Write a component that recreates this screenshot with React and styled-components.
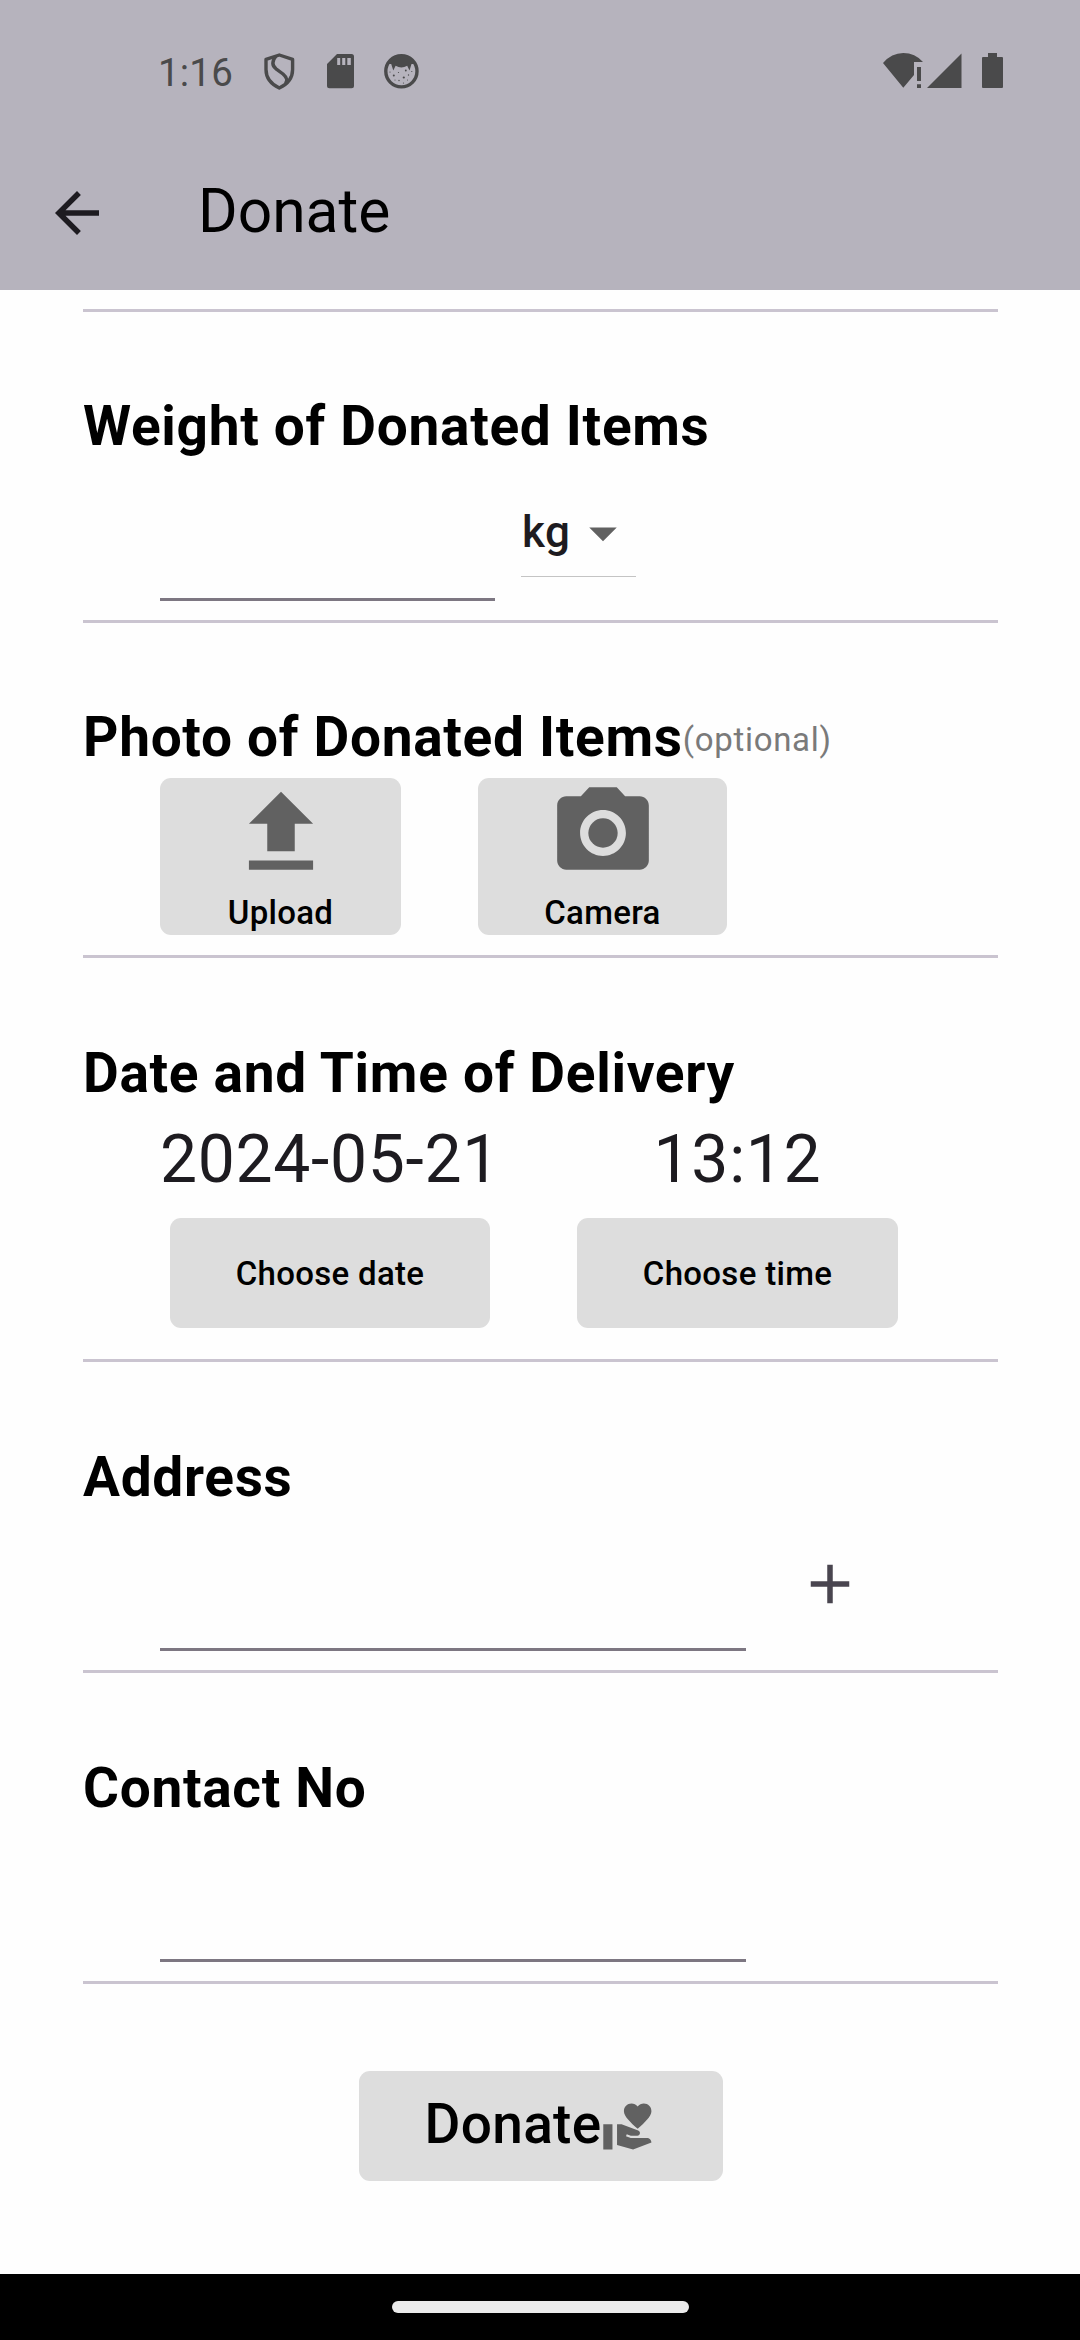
import React from 'react';
import styled, { createGlobalStyle } from 'styled-components';
import { MdArrowBack, MdFileUpload, MdPhotoCamera, MdArrowDropDown, MdAdd, MdVolunteerActivism } from 'react-icons/md';

const GlobalStyle = createGlobalStyle`
  * { box-sizing: border-box; }
  body { margin: 0; background: #fefefe; font-family: Roboto, "Liberation Sans", sans-serif; }
  svg { display: block; flex: none; }
`;

const Screen = styled.div`
  width: 1080px;
  height: 2340px;
  display: flex;
  flex-direction: column;
  background: #fefefe;
  overflow: hidden;
`;

const Header = styled.header`
  height: 290px;
  flex: none;
  background: #b6b3bd;
`;

const StatusBar = styled.div`
  height: 136px;
  display: flex;
  align-items: flex-start;
  padding: 50px 77px 0 158px;
  color: #4a4a4b;
`;

const Clock = styled.span`
  width: 105px;
  font-size: 38.5px;
  line-height: 45px;
  letter-spacing: 0.2px;
`;

const StatusIcons = styled.div`
  display: flex;
  gap: ${(p) => p.$gap}px;
  margin-left: ${(p) => (p.$end ? 'auto' : '0')};
`;

const AppBar = styled.div`
  height: 154px;
  display: flex;
  align-items: center;
  padding: 0 44px;
  color: #1d1b20;
`;

const Title = styled.h1`
  margin: 0 0 4px 88px;
  color: #000;
  font-size: 60.5px;
  font-weight: 400;
  line-height: 71px;
  letter-spacing: 0;
`;

const Form = styled.main`
  flex: 1;
  display: flex;
  flex-direction: column;
  padding: 19px 82px 0 83px;
`;

const Divider = styled.hr`
  width: 100%;
  height: 3px;
  flex: none;
  margin: 0;
  border: 0;
  background: #cac4d0;
`;

const Section = styled.section`
  height: ${(p) => p.$height}px;
  flex: none;
  padding-top: ${(p) => p.$top || 82}px;
`;

const HeadingRow = styled.div`
  display: flex;
  align-items: center;
  height: 64px;
`;

const Heading = styled.h2`
  margin: 0;
  color: #000;
  font-size: 55px;
  font-weight: 700;
  line-height: 64px;
  letter-spacing: 0.6875px;
  white-space: nowrap;
`;

const Optional = styled.span`
  margin-top: 4px;
  color: #7a7a7a;
  font-size: 33px;
  line-height: 39px;
  letter-spacing: 0.6875px;
`;

const Row = styled.div`
  display: flex;
  align-items: flex-start;
  padding-left: 77px;
  padding-top: ${(p) => p.$top || 0}px;
`;

const Field = styled.input`
  width: ${(p) => p.$width}px;
  height: ${(p) => p.$height || 142}px;
  padding: 0;
  border: 0;
  border-bottom: 3px solid #7d7782;
  border-radius: 0;
  background: transparent;
  font: 400 44px Roboto, sans-serif;
  outline: none;
`;

const UnitSelect = styled.div`
  width: 115px;
  height: 77px;
  display: flex;
  margin: 42px 0 0 26px;
  justify-content: space-between;
  border-bottom: 1px solid #c4c4c4;
  color: #616161;
`;

const Unit = styled.span`
  padding: 6px 0 0 1px;
  margin-right: -4px;
  color: #1d1b20;
  font-size: 44px;
  font-weight: 500;
  line-height: 52px;
  letter-spacing: 0.4px;
`;

const Button = styled.button`
  width: ${(p) => p.$width}px;
  height: ${(p) => p.$height || 110}px;
  display: flex;
  flex-direction: ${(p) => (p.$stacked ? 'column' : 'row')};
  align-items: center;
  justify-content: ${(p) => (p.$stacked ? 'flex-start' : 'center')};
  gap: ${(p) => (p.$stacked ? 5 : 0)}px;
  margin: 0;
  margin-left: ${(p) => p.$left || 0}px;
  padding: 0;
  border: 0;
  border-radius: 11px;
  background: #dddddd;
  color: #616161;
  font-family: inherit;
`;

const Label = styled.span`
  margin-bottom: ${(p) => (p.$large ? 4 : 0)}px;
  color: #000;
  font-size: ${(p) => (p.$large ? 55 : 33)}px;
  font-weight: 500;
  line-height: ${(p) => (p.$large ? 64 : 39)}px;
  letter-spacing: 0.3px;
  white-space: nowrap;
`;

const Picker = styled.div`
  display: flex;
  flex-direction: column;
  width: ${(p) => p.$width}px;
  margin-left: ${(p) => p.$left || 0}px;
  align-items: ${(p) => (p.$center ? 'center' : 'flex-start')};
  gap: 20px;
`;

const Value = styled.span`
  color: #1d1b20;
  font-size: 66px;
  line-height: 77px;
  letter-spacing: 0.6875px;
  white-space: nowrap;
`;

const AddButton = styled.button`
  margin: 42px 0 0 51px;
  padding: 0;
  border: 0;
  background: transparent;
  color: #49454f;
`;

const Submit = styled.div`
  display: flex;
  justify-content: center;
  padding-top: 87px;
`;

const NavBar = styled.footer`
  height: 66px;
  flex: none;
  display: flex;
  justify-content: center;
  padding-top: 27px;
  background: #000;
`;

const NavHandle = styled.div`
  width: 297px;
  height: 12px;
  border-radius: 6px;
  background: #ebebeb;
`;

const ShieldIcon = () => (
  <svg width="35" height="40" viewBox="0 0 35 40" fill="none" stroke="#4a4a4b" strokeWidth="3.4" strokeLinejoin="round">
    <path d="M16.300 5 29.600 9.400V19.500C29.600 27.500 24.500 34.200 16.300 38C8.200 34.200 3 27.500 3 19.500V9.400Z" />
    <path d="M13 6C9 11 9 15.500 13 18.800L20 24C24 27.500 24.800 30 22.500 33.500" />
  </svg>
);

const SdIcon = () => (
  <svg width="27" height="40" viewBox="0 0 27 40" fill="#4a4a4b">
    <path
      fillRule="evenodd"
      d="M10 4H24.500Q27 4 27 6.500V35.800Q27 38.300 24.500 38.300H2.500Q0 38.300 0 35.800V14ZM10.200 8V15H13.200V8ZM15.200 8V15H18.300V8ZM20.300 8V15H23.800V8Z"
    />
  </svg>
);

const FaceIcon = () => (
  <svg width="36" height="40" viewBox="0 0 36 40">
    <circle cx="18.400" cy="21.300" r="15.600" fill="none" stroke="#4a4a4b" strokeWidth="3.400" />
    <path
      d="M5 14C8 8 12 5 18.400 5S29 8 32 14L28.500 14 26.500 20.500 24.200 15.800Q18.400 19 12.600 15.800L10.300 20.500 8.200 14Z"
      fill="#4a4a4b"
    />
    <g fill="#4a4a4b">
      <circle cx="22.800" cy="20.500" r="0.900" />
      <circle cx="10.800" cy="25.500" r="1" />
      <circle cx="20.800" cy="27.500" r="1.100" />
      <circle cx="15.500" cy="22.500" r="0.600" />
      <circle cx="25.500" cy="25" r="0.700" />
      <circle cx="16" cy="30.500" r="0.700" />
      <circle cx="7" cy="22" r="0.600" />
      <circle cx="28.800" cy="21.500" r="0.600" />
      <circle cx="12" cy="30" r="0.500" />
      <circle cx="24.500" cy="30" r="0.500" />
      <circle cx="20.500" cy="33" r="0.600" />
    </g>
  </svg>
);

const WifiIcon = () => (
  <svg width="40" height="38" viewBox="0 0 40 38" fill="#4a4a4b">
    <path d="M0 13Q8.500 3 20.300 3T40 12H31V25L20.300 37.700Z" />
    <path d="M34 17H38V31H34ZM34 34.300H38V38H34Z" />
  </svg>
);

const SignalIcon = () => (
  <svg width="35" height="38" viewBox="0 0 35 38" fill="#4a4a4b">
    <path d="M34.500 3.500V38H0Z" />
  </svg>
);

const BatteryIcon = () => (
  <svg width="21" height="38" viewBox="0 0 21 38" fill="#4a4a4b">
    <path d="M6 3H15V7H20Q21 7 21 8V37Q21 38 20 38H1Q0 38 0 37V8Q0 7 1 7H6Z" />
  </svg>
);

export default function App() {
  return (
    <Screen>
      <GlobalStyle />
      <Header>
        <StatusBar>
          <Clock>1:16</Clock>
          <StatusIcons $gap={29}>
            <ShieldIcon />
            <SdIcon />
            <FaceIcon />
          </StatusIcons>
          <StatusIcons $gap={20} $end>
            <StatusIcons $gap={4}>
              <WifiIcon />
              <SignalIcon />
            </StatusIcons>
            <BatteryIcon />
          </StatusIcons>
        </StatusBar>
        <AppBar>
          <MdArrowBack size={66} />
          <Title>Donate</Title>
        </AppBar>
      </Header>

      <Form>
        <Divider />
        <Section $height={308}>
          <Heading>Weight of Donated Items</Heading>
          <Row>
            <Field $width={335} $height={143} aria-label="Weight" />
            <UnitSelect>
              <Unit>kg</Unit>
              <MdArrowDropDown size={66} />
            </UnitSelect>
          </Row>
        </Section>

        <Divider />
        <Section $height={332}>
          <HeadingRow>
            <Heading>Photo of Donated Items</Heading>
            <Optional>(optional)</Optional>
          </HeadingRow>
          <Row $top={9}>
            <Button $width={241} $height={157} $stacked>
              <MdFileUpload size={110} />
              <Label>Upload</Label>
            </Button>
            <Button $width={249} $height={157} $left={77} $stacked>
              <MdPhotoCamera size={110} />
              <Label>Camera</Label>
            </Button>
          </Row>
        </Section>

        <Divider />
        <Section $height={401} $top={83}>
          <Heading>Date and Time of Delivery</Heading>
          <Row $top={16}>
            <Picker $width={330}>
              <Value>2024-05-21</Value>
              <Button $width={320} $left={10}>
                <Label>Choose date</Label>
              </Button>
            </Picker>
            <Picker $width={321} $left={87} $center>
              <Value>13:12</Value>
              <Button $width={321}>
                <Label>Choose time</Label>
              </Button>
            </Picker>
          </Row>
        </Section>

        <Divider />
        <Section $height={308} $top={83}>
          <Heading>Address</Heading>
          <Row>
            <Field $width={586} aria-label="Address" />
            <AddButton aria-label="Add address">
              <MdAdd size={66} />
            </AddButton>
          </Row>
        </Section>

        <Divider />
        <Section $height={308} $top={83}>
          <Heading>Contact No</Heading>
          <Row>
            <Field $width={586} aria-label="Contact number" />
          </Row>
        </Section>

        <Divider />
        <Submit>
          <Button $width={364}>
            <Label $large>Donate</Label>
            <MdVolunteerActivism size={55} />
          </Button>
        </Submit>
      </Form>

      <NavBar>
        <NavHandle />
      </NavBar>
    </Screen>
  );
}
